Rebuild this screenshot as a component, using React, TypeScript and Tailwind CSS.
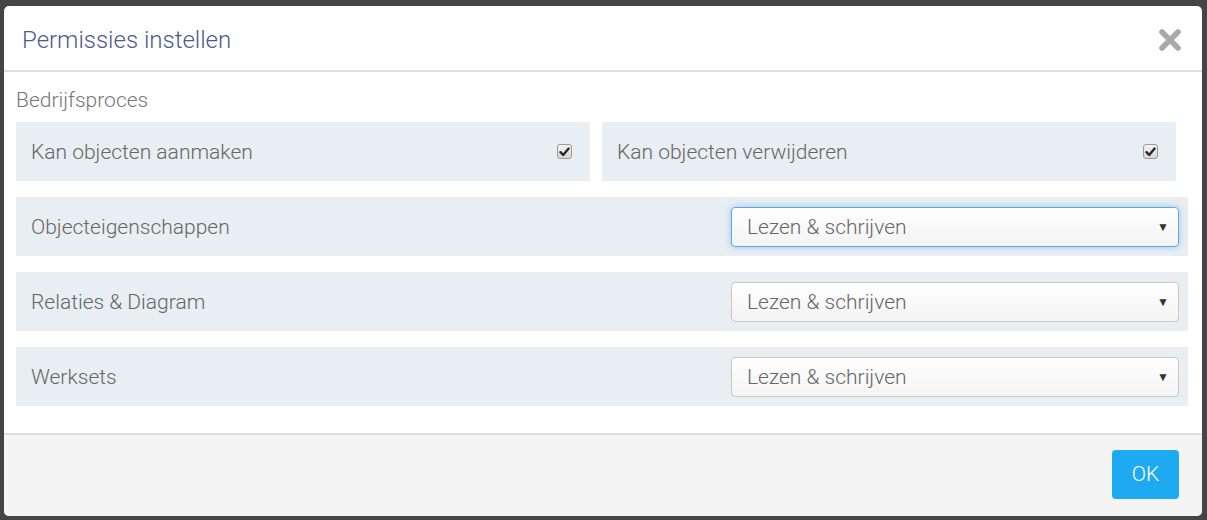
import React from "react";

const font = { fontFamily: "Roboto, 'Noto Sans', sans-serif" };

function Check() {
  return (
    <div className="w-[15px] h-[15px] rounded-[3px] border border-[#9a9a9a] bg-gradient-to-b from-[#f4f4f4] to-[#d8d8d8] flex items-center justify-center">
      <svg width="11" height="10" viewBox="0 0 11 10">
        <path d="M1.5 5.2 L4.2 8 L9.6 1.6" fill="none" stroke="#2a2a2a" strokeWidth="2.4" strokeLinecap="round" strokeLinejoin="round" />
      </svg>
    </div>
  );
}

function Select({ focused }: { focused?: boolean }) {
  return (
    <div
      className={
        focused
          ? "w-[448px] h-[40px] rounded-[4px] bg-gradient-to-b from-white to-[#f3f3f3] flex items-center justify-between pl-[15px] pr-[9px] text-[21px] font-light text-[#666] border border-[#5fa8e8] shadow-[0_0_6px_rgba(90,160,230,0.55)]"
          : "w-[448px] h-[40px] rounded-[4px] bg-gradient-to-b from-white to-[#f3f3f3] flex items-center justify-between pl-[15px] pr-[9px] text-[21px] font-light text-[#666] border border-[#c8c8c8]"
      }
    >
      <span className="pt-[2px]">Lezen &amp; schrijven</span>
      <span className="text-[12px] text-[#333] leading-none">▼</span>
    </div>
  );
}

function Row({ label, focused }: { label: string; focused?: boolean }) {
  return (
    <div className="h-[59px] bg-[#e8eef2] flex items-center justify-between pl-[15px] pr-[9px]">
      <span className="text-[21px] font-light text-[#666] pt-[2px]">{label}</span>
      <Select focused={focused} />
    </div>
  );
}

export default function App() {
  return (
    <div className="w-[1207px] h-[520px] bg-[#454545] pt-[6px] pl-[4px] pr-[5px]" style={font}>
      <div className="w-[1198px] h-[510px] bg-white rounded-[5px] overflow-hidden flex flex-col">
        <div className="h-[66px] flex items-center justify-between pl-[18px] pr-[20px] pt-[3px] border-b-2 border-[#dedede] shrink-0">
          <span className="text-[24px] text-[#4b5a8c] font-light">Permissies instellen</span>
          <svg width="24" height="24" viewBox="0 0 24 24">
            <path d="M4 4 L20 20 M20 4 L4 20" stroke="#a9a9a9" strokeWidth="5.5" strokeLinecap="round" />
          </svg>
        </div>
        <div className="pt-[16px] pl-[12px] pr-[14px] pb-[27px]">
          <div className="text-[21px] font-light leading-[24px] text-[#777] mb-[10px]">Bedrijfsproces</div>
          <div className="flex gap-[12px] mr-[12px] mb-[16px]">
            <div className="flex-1 h-[59px] bg-[#e8eef2] flex items-center justify-between pl-[15px] pr-[18px]">
              <span className="text-[21px] font-light text-[#666] pt-[2px]">Kan objecten aanmaken</span>
              <Check />
            </div>
            <div className="flex-1 h-[59px] bg-[#e8eef2] flex items-center justify-between pl-[15px] pr-[18px]">
              <span className="text-[21px] font-light text-[#666] pt-[2px]">Kan objecten verwijderen</span>
              <Check />
            </div>
          </div>
          <div className="flex flex-col gap-[16px]">
            <Row label="Objecteigenschappen" focused />
            <Row label="Relaties & Diagram" />
            <Row label="Werksets" />
          </div>
        </div>
        <div className="flex-1 bg-[#f4f4f4] border-t-2 border-[#dedede] flex justify-end items-start pt-[15px] pr-[23px]">
          <button className="w-[67px] h-[49px] rounded-[4px] bg-[#1eaaf1] text-white text-[21px] font-light">OK</button>
        </div>
      </div>
    </div>
  );
}
